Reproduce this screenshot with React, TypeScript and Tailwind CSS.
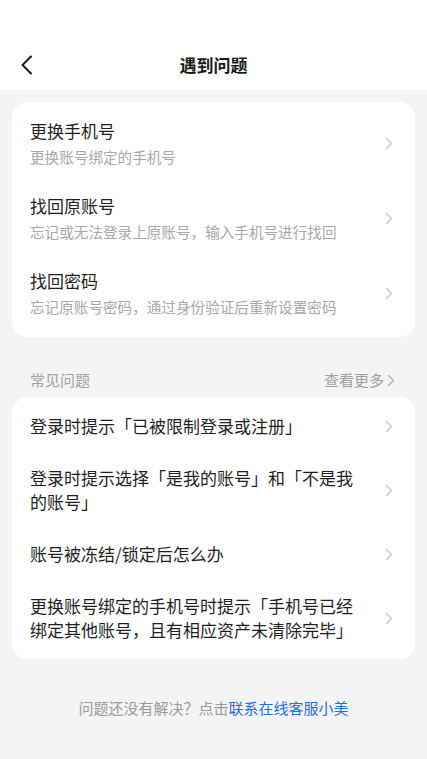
import React from 'react';

const accountItems = [
  { title: '更换手机号', desc: '更换账号绑定的手机号' },
  { title: '找回原账号', desc: '忘记或无法登录上原账号，输入手机号进行找回' },
  { title: '找回密码', desc: '忘记原账号密码，通过身份验证后重新设置密码' },
];

const faqItems = [
  '登录时提示「已被限制登录或注册」',
  '登录时提示选择「是我的账号」和「不是我的账号」',
  '账号被冻结/锁定后怎么办',
  '更换账号绑定的手机号时提示「手机号已经绑定其他账号，且有相应资产未清除完毕」',
];

const Chevron = ({ className = '' }: { className?: string }) => (
  <svg width="8" height="13" viewBox="0 0 8 13" className={className} fill="none">
    <path d="M1.5 1.5 L6.5 6.5 L1.5 11.5" stroke="currentColor" strokeWidth="1.4" strokeLinecap="round" strokeLinejoin="round" />
  </svg>
);

export default function App() {
  return (
    <div
      className="min-h-[759px] w-full bg-[#f4f4f4]"
      style={{ fontFamily: '"Noto Sans CJK SC", "Noto Sans", sans-serif' }}
    >
      {/* header */}
      <div className="bg-white pt-10">
        <div className="relative flex h-[50px] items-center justify-center">
          <button className="absolute left-[18px] top-1/2 -translate-y-1/2 p-0.5">
            <svg width="14" height="20" viewBox="0 0 14 20" fill="none">
              <path d="M11 1.5 L2.5 10 L11 18.5" stroke="#1a1a1a" strokeWidth="2" strokeLinecap="round" strokeLinejoin="round" />
            </svg>
          </button>
          <h1 className="text-[17px] font-semibold leading-6 text-[#1a1a1a]">遇到问题</h1>
        </div>
      </div>

      <div className="px-3 pt-3">
        {/* account card */}
        <div className="rounded-2xl bg-white pt-1 pb-[6px]">
          {accountItems.map((item) => (
            <div key={item.title} className="flex items-center py-[13px] pl-[18px] pr-[22px]">
              <div className="flex-1">
                <div className="text-[17px] leading-6 text-[#1f1f1f]">{item.title}</div>
                <div className="mt-[3px] text-[14.6px] leading-[22px] text-[#a8a8a8]">{item.desc}</div>
              </div>
              <Chevron className="ml-6 shrink-0 text-[#c6c6c6]" />
            </div>
          ))}
        </div>

        {/* faq header */}
        <div className="flex items-center justify-between pt-[32px] pb-[6px] pl-[18px] pr-[20px]">
          <span className="text-[15px] leading-[22px] text-[#a0a0a0]">常见问题</span>
          <span className="flex items-center gap-[3px] text-[15px] leading-[22px] text-[#a0a0a0]">
            查看更多
            <Chevron className="text-[#b0b0b0]" />
          </span>
        </div>

        {/* faq card */}
        <div className="rounded-2xl bg-white py-[3px]">
          {faqItems.map((q) => (
            <div key={q} className="flex items-center py-[14px] pl-[18px] pr-[22px]">
              <div className="flex-1 pr-6 text-[17px] leading-6 text-[#1f1f1f]">{q}</div>
              <Chevron className="shrink-0 text-[#c6c6c6]" />
            </div>
          ))}
        </div>

        {/* footer */}
        <div className="mt-[38px] text-center text-[15px] leading-[22px] text-[#9a9a9a]">
          问题还没有解决？点击<span className="text-[#1e6ff0]">联系在线客服小美</span>
        </div>
      </div>
    </div>
  );
}
